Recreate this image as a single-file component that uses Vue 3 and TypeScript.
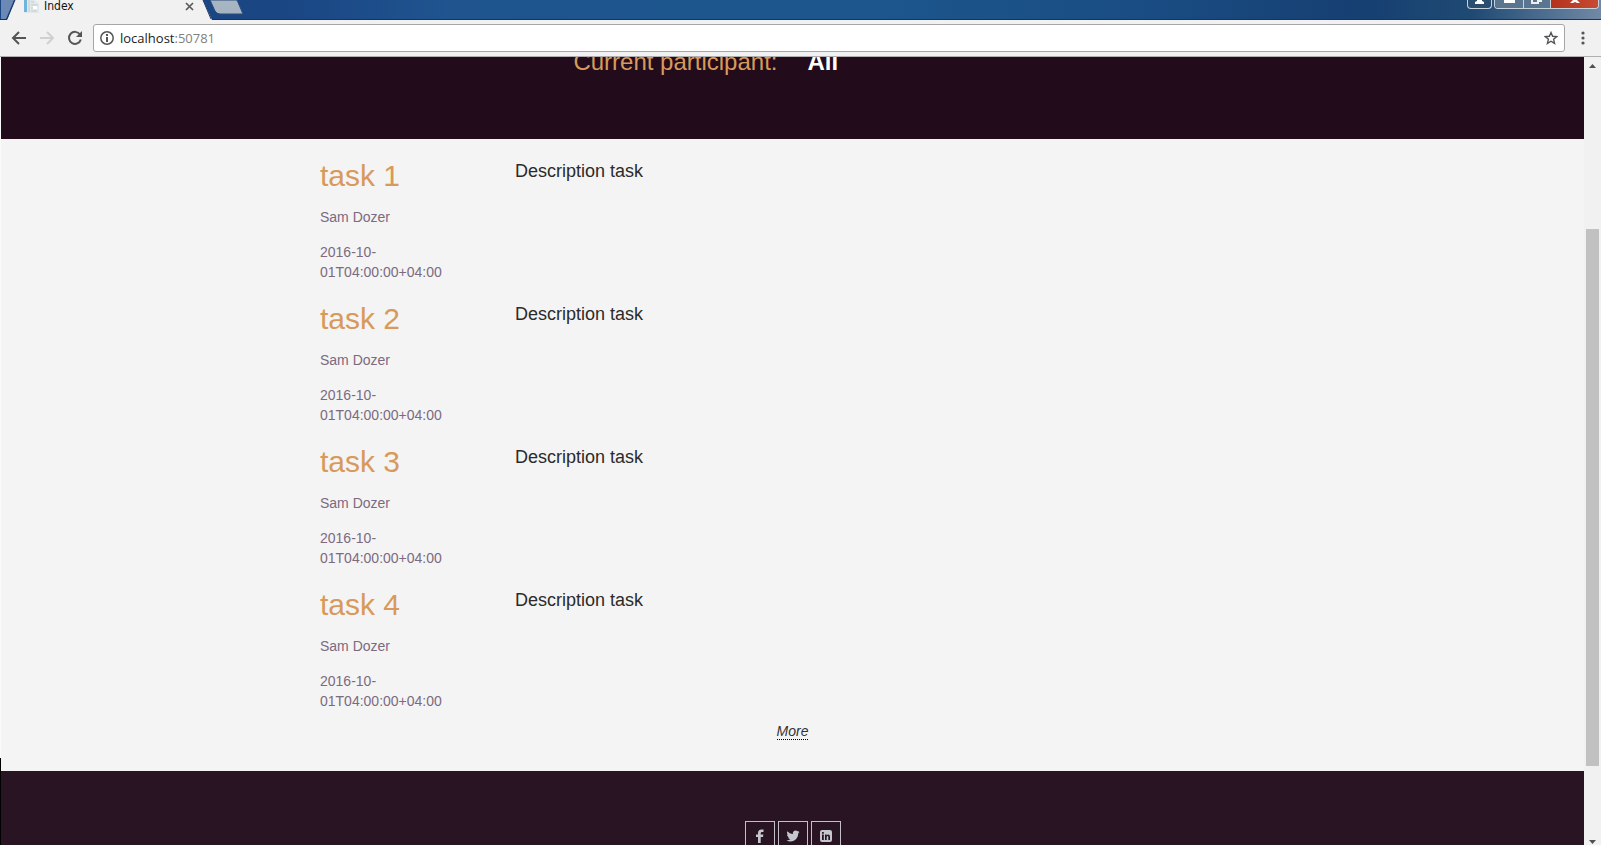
<script setup lang="ts">
interface Task {
  id: number
  title: string
  participant: string
  date: string
  description: string
}

const tasks: Task[] = [1, 2, 3, 4].map((id) => ({
  id,
  title: `task ${id}`,
  participant: 'Sam Dozer',
  date: '2016-10-01T04:00:00+04:00',
  description: 'Description task',
}))
</script>

<template>
  <div class="window">
    <div class="tabstrip">
      <svg class="tab-shape" width="245" height="20" viewBox="0 0 245 20" aria-hidden="true">
        <path d="M1 0H14L6 19H1Z" fill="#6c88b5" />
        <path d="M15 0H203L212 20H7Z" fill="#f1f1f1" />
        <path d="M15 0L7 19M203 0L211 19" stroke="#1c3763" fill="none" />
        <path d="M210 0H237L243 14H220Q217 14 215 11Z" fill="#a7b4c1" stroke="#284d7c" />
        <path d="M24 0H35L39 4V13H24Z" fill="#e3e8eb" />
        <path d="M24 0H27V12H24Z" fill="#6eb4dc" />
        <path d="M29 0V12M31 2H34M31 5H38M31 8H37M31 11H37" stroke="#c3ccd2" />
        <path d="M33 6H37V9H33Z" fill="#fff" />
      </svg>
      <div class="tab">
        <span>Index</span>
        <button class="tab-close" type="button" aria-label="Close tab">
          <svg width="9" height="9" viewBox="0 0 9 9"><path d="M1 1L8 8M8 1L1 8" stroke="#5a5a5a" stroke-width="1.7" /></svg>
        </button>
      </div>
      <div class="window-buttons">
        <button type="button" class="wb user" aria-label="User">
          <svg width="23" height="8" viewBox="0 0 23 8"><path d="M9 0h5v1l2 1v2H7V2l2-1z" fill="#fff" /></svg>
        </button>
        <div class="wb-group">
          <button type="button" class="wb" aria-label="Minimize">
            <svg width="28" height="8" viewBox="0 0 28 8"><path d="M9 0h11v3H9z" fill="#fff" /></svg>
          </button>
          <button type="button" class="wb" aria-label="Restore">
            <svg width="26" height="8" viewBox="0 0 26 8"><path d="M8 0v3h6V0M14 1h3V0" fill="none" stroke="#eee" stroke-width="2" /></svg>
          </button>
          <button type="button" class="wb close" aria-label="Close">
            <svg width="47" height="8" viewBox="0 0 47 8"><path d="M22 0h4l3 3h-3l-2-1-2 1h-3z" fill="#fff" /></svg>
          </button>
        </div>
      </div>
    </div>

    <div class="toolbar">
      <button type="button" class="tool" aria-label="Back">
        <svg width="16" height="16" viewBox="0 0 16 16"><path d="M15 8H2M8 2L2 8L8 14" fill="none" stroke="#555" stroke-width="2" /></svg>
      </button>
      <button type="button" class="tool" aria-label="Forward">
        <svg width="16" height="16" viewBox="0 0 16 16"><path d="M1 8H14M8 2L14 8L8 14" fill="none" stroke="#d0d0d0" stroke-width="2" /></svg>
      </button>
      <button type="button" class="tool" aria-label="Reload">
        <svg width="16" height="16" viewBox="0 0 16 16"><path d="M13 4.500A6 6 0 1 0 13.800 9.500" fill="none" stroke="#555" stroke-width="2" /><path d="M15 1V7H9Z" fill="#555" /></svg>
      </button>
      <div class="address">
        <svg width="14" height="14" viewBox="0 0 14 14" aria-hidden="true"><circle cx="7" cy="7" r="6.200" fill="none" stroke="#555" stroke-width="1.500" /><path d="M6 3h2v2H6zM6 6h2v5H6z" fill="#555" /></svg>
        <a class="url" href="http://localhost:50781">localhost<span>:50781</span></a>
        <button type="button" class="tool" aria-label="Bookmark">
          <svg width="14" height="14" viewBox="0 0 14 14"><path d="M7 1.500L8.600 5.300L12.700 5.600L9.600 8.300L10.600 12.400L7 10.200L3.400 12.400L4.400 8.300L1.300 5.600L5.400 5.300Z" fill="none" stroke="#555" stroke-width="1.400" /></svg>
        </button>
      </div>
      <button type="button" class="tool menu" aria-label="Menu">
        <svg width="4" height="14" viewBox="0 0 4 14"><g fill="#555"><circle cx="2" cy="2" r="1.600" /><circle cx="2" cy="7" r="1.600" /><circle cx="2" cy="12" r="1.600" /></g></svg>
      </button>
    </div>

    <div class="viewport">
      <div class="page">
        <header class="banner">
          <div class="container">
            <div class="banner-label">Current participant:</div>
            <strong class="banner-value">All</strong>
          </div>
        </header>
        <main class="content">
          <article v-for="task in tasks" :key="task.id" class="container">
            <div class="meta">
              <h2>{{ task.title }}</h2>
              <p>{{ task.participant }}</p>
              <p>{{ task.date }}</p>
            </div>
            <div class="description">{{ task.description }}</div>
          </article>
          <div class="more"><a href="#more">More</a></div>
        </main>
        <footer class="footer">
          <a href="#facebook" aria-label="Facebook">
            <svg width="14" height="14" viewBox="0 0 14 14"><path d="M5 14V8H3V5.500H5V4Q5 .500 8.500 .500H10.500V3H9Q7.700 3 7.700 4.200V5.500H10.400L10 8H7.700V14Z" /></svg>
          </a>
          <a href="#twitter" aria-label="Twitter">
            <svg width="14" height="14" viewBox="0 0 14 14"><path d="M13.500 3.200c-.4.600-.8 1-1.300 1.400 0 4.200-3 7.900-7.500 7.900-1.500 0-3-.4-4.200-1.200 1.500.1 2.900-.3 4-1.100-1.200 0-2.200-.8-2.500-1.900h1.200C1.900 8 1 6.900 1 5.600l1.200.3C1 5 .6 3.400 1.400 2.200c1.300 1.600 3.300 2.600 5.500 2.700C6.500 3 7.900 1.500 9.600 1.500c.8 0 1.400.3 1.900.8l1.700-.6-1.100 1.500z" /></svg>
          </a>
          <a href="#linkedin" aria-label="LinkedIn">
            <svg width="14" height="14" viewBox="0 0 14 14"><path fill-rule="evenodd" d="M3 1H11Q13 1 13 3V11Q13 13 11 13H3Q1 13 1 11V3Q1 1 3 1ZM3 5.500V11H4.800V5.500ZM3 3V4.700H4.800V3ZM6 5.500V11H7.700V8Q7.700 7 8.500 7T9.300 8V11H11V7.700Q11 5.400 9.200 5.400Q8.200 5.400 7.700 6.200V5.500Z" /></svg>
          </a>
        </footer>
      </div>
      <div class="scrollbar" aria-hidden="true">
        <svg width="17" height="17" viewBox="0 0 17 17"><path d="M5 11H12L8.500 7Z" fill="#505050" /></svg>
        <div class="track"><div class="thumb"></div></div>
        <svg width="17" height="17" viewBox="0 0 17 17"><path d="M5 12H12L8.500 16Z" fill="#505050" /></svg>
      </div>
    </div>
  </div>
</template>

<style>
body {
  margin: 0;
}
</style>

<style scoped>
* {
  box-sizing: border-box;
}
button {
  padding: 0;
  border: 0;
  background: none;
  font: inherit;
}
svg {
  display: block;
}
.window {
  display: flex;
  flex-direction: column;
  height: 100vh;
  overflow: hidden;
  font-family: "Liberation Sans", Arial, sans-serif;
  font-size: 14px;
  line-height: 20px;
}
.tabstrip {
  position: relative;
  display: flex;
  justify-content: space-between;
  flex: none;
  height: 20px;
  border-bottom: 1px solid #17345f;
  background: linear-gradient(90deg, #1a4684 0%, #1a4684 18%, #1f548f 28%, #1c568c 55%, #194c82 72%, #163f72 85%, #1f4a73 92%, #7189a5 100%);
}
.tab-shape {
  position: absolute;
  left: 0;
  top: 0;
}
.tab {
  position: relative;
  display: flex;
  justify-content: space-between;
  width: 194px;
  padding-left: 44px;
  font-family: "DejaVu Sans Condensed", "DejaVu Sans", sans-serif;
  font-size: 12px;
  line-height: 12px;
  color: #111;
}
.tab-close {
  height: 12px;
}
.window-buttons {
  display: flex;
  gap: 2px;
  height: 9px;
  margin-right: 2px;
}
.wb-group {
  display: flex;
  overflow: hidden;
  border: 1px solid #c6d2de;
  border-top: 0;
  border-radius: 0 0 4px 4px;
}
.wb {
  height: 8px;
  background: #5a7590;
}
.wb + .wb {
  border-left: 1px solid #c6d2de;
}
.wb.user {
  height: 9px;
  border: 1px solid #c6d2de;
  border-top: 0;
  border-radius: 0 0 4px 4px;
  background: #2b4d70;
}
.wb.close {
  background: linear-gradient(90deg, #b3321c, #c74a33);
}
.toolbar {
  display: flex;
  align-items: center;
  flex: none;
  gap: 12px;
  height: 37px;
  padding: 0 16px 0 11px;
  border-bottom: 1px solid #b0aeb0;
  background: #f1f1f1;
}
.tool {
  flex: none;
}
.address {
  display: flex;
  align-items: center;
  flex: 1;
  gap: 6px;
  height: 28px;
  margin-left: -2px;
  padding: 0 6px;
  border: 1px solid #a6a6a6;
  border-radius: 3px;
  background: #fff;
}
.url {
  flex: 1;
  font-family: "Open Sans", "Noto Sans", sans-serif;
  font-size: 13px;
  color: #222;
  text-decoration: none;
}
.url span {
  color: #808080;
}
.menu {
  margin-left: 4px;
}
.viewport {
  display: flex;
  flex: 1;
  min-height: 0;
  padding-left: 1px;
  background: linear-gradient(#fafafa 0 89%, #000 89%);
}
.page {
  display: flex;
  flex-direction: column;
  flex: 1;
  overflow: hidden;
  background: #f4f4f4;
}
.container {
  display: grid;
  grid-template-columns: repeat(12, minmax(0, 1fr));
  width: 100%;
  max-width: 1170px;
  margin: 0 auto;
}
.banner {
  display: flex;
  align-items: flex-end;
  flex: none;
  height: 82px;
  padding-bottom: 64px;
  overflow: hidden;
  background: #220b1b;
  font-size: 24px;
  line-height: 26px;
}
.banner-label {
  grid-column: 1 / 7;
  padding-right: 15px;
  text-align: right;
  color: #d89a5b;
}
.banner-value {
  grid-column: 7 / 13;
  padding-left: 15px;
  color: #fff;
}
.content {
  flex: none;
  padding-bottom: 30px;
}
.meta {
  grid-column: 2 / 4;
  padding: 20px 15px 0;
}
h2 {
  margin: 0 0 15px;
  font-size: 30px;
  font-weight: 400;
  line-height: 33px;
  color: #d89a5b;
}
p {
  margin: 0 0 15px;
  color: #7c6a80;
}
p:last-child {
  margin-bottom: 0;
}
.description {
  grid-column: 4 / 12;
  padding: 20px 15px 0;
  font-size: 18px;
  line-height: 24px;
  color: #2b2b2b;
}
.more {
  padding-top: 10px;
  text-align: center;
  font-style: italic;
}
.more a {
  border-bottom: 1px dotted #000;
  color: #333;
  text-decoration: none;
}
.footer {
  display: flex;
  justify-content: center;
  flex: 1 0 auto;
  gap: 3px;
  height: 74px;
  padding-top: 50px;
  background: #281423;
}
.footer a {
  display: flex;
  align-items: center;
  justify-content: center;
  width: 30px;
  height: 30px;
  border: 1px solid #c3bfca;
}
.footer svg {
  fill: #c6c6cf;
}
.scrollbar {
  display: flex;
  flex-direction: column;
  flex: none;
  width: 17px;
  background: #f1f1f1;
}
.track {
  display: flex;
  flex-direction: column;
  flex: 1;
  padding: 155px 2px 62px;
}
.thumb {
  flex: 1;
  background: #c1c1c1;
}
</style>
